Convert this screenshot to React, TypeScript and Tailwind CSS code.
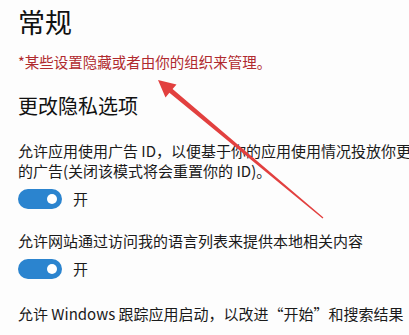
import React from 'react';

const cjk = { fontFamily: '"Noto Sans CJK SC", "Noto Sans", sans-serif' };

const Toggle: React.FC<{ label: string }> = ({ label }) => (
  <div className="mt-2 flex items-center gap-[11px]">
    <div className="flex h-5 w-11 items-center justify-end rounded-full bg-[#2b84cf] pr-[5px]">
      <div className="h-[10px] w-[10px] rounded-full bg-white" />
    </div>
    <span className="text-[15px] leading-5 text-[#1a1a1a]">{label}</span>
  </div>
);

const App: React.FC = () => {
  return (
    <div className="relative h-[335px] w-[409px] overflow-hidden bg-[#fdfdfd]" style={cjk}>
      <div className="w-[460px] px-[18px] pt-1">
        {/* Title */}
        <h1 className="text-[27px] font-normal leading-9 text-[#111]">常规</h1>
        <p className="mt-3 text-[14.5px] leading-5 text-[#b02a2e]">*某些设置隐藏或者由你的组织来管理。</p>

        <h2 className="mt-5 text-[20px] font-normal leading-7 text-[#111]">更改隐私选项</h2>

        <div className="mt-[21px] text-[15px] leading-5 text-[#1a1a1a]">
          <div className="whitespace-nowrap">允许应用使用广告 ID，以便基于你的应用使用情况投放你更感兴趣</div>
          <div className="whitespace-nowrap">的广告(关闭该模式将会重置你的 ID)。</div>
        </div>
        <Toggle label="开" />

        <div className="mt-[22px] whitespace-nowrap text-[15px] leading-5 text-[#1a1a1a]">
          允许网站通过访问我的语言列表来提供本地相关内容
        </div>
        <Toggle label="开" />

        <div className="mt-[25px] whitespace-nowrap text-[15px] leading-5 text-[#1a1a1a]">
          允许 Windows 跟踪应用启动，以改进“开始”和搜索结果
        </div>
      </div>

      {/* Red annotation arrow */}
      <svg className="pointer-events-none absolute left-0 top-0" width="409" height="335" viewBox="0 0 409 335">
        <polygon
          points="158,80 176.5,84.5 172.6,89 323.4,217.6 322.6,218.4 169.4,92.8 165.5,97.5"
          fill="#e2403f"
        />
      </svg>
    </div>
  );
};

export default App;
